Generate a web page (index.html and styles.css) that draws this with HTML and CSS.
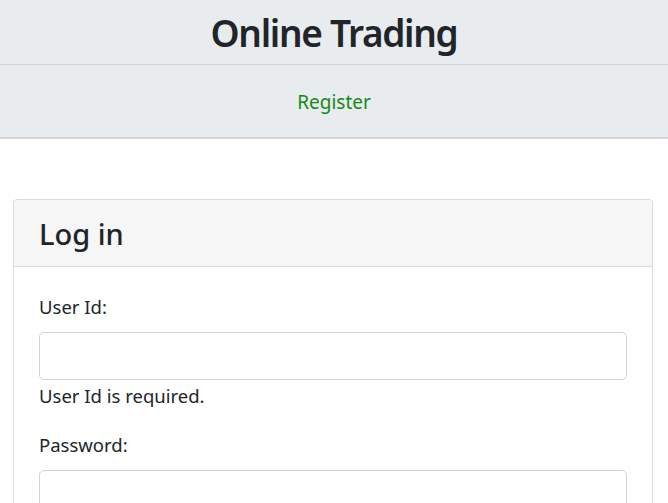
FILE: index.html
```html
<!DOCTYPE html>
<html lang="en">
<head>
<meta charset="utf-8">
<title>Online Trading</title>
<link rel="stylesheet" href="styles.css">
</head>
<body>
<header class="site-header">
  <h1 class="site-title">Online Trading</h1>
</header>
<nav class="site-nav">
  <a class="nav-link" href="#">Register</a>
</nav>
<main class="page">
  <section class="card">
    <div class="card-header">
      <h2 class="card-title">Log in</h2>
    </div>
    <form class="card-body">
      <div class="form-group">
        <label class="form-label" for="userId">User Id:</label>
        <input class="form-control" id="userId" type="text">
        <div class="form-error">User Id is required.</div>
      </div>
      <div class="form-group">
        <label class="form-label" for="password">Password:</label>
        <input class="form-control" id="password" type="password">
      </div>
    </form>
  </section>
</main>
</body>
</html>
```
FILE: styles.css
```css
* { box-sizing: border-box; }
html, body { margin: 0; padding: 0; }
body {
  font-family: "Noto Sans", "Open Sans", sans-serif;
  color: #212529;
  background: #fff;
  font-size: 18.5px;
  line-height: 1.5;
}
.site-header {
  background: #e9ecef;
  height: 65px;
  border-bottom: 1px solid #d2d4d6;
  display: flex;
  align-items: center;
  justify-content: center;
}
.site-title {
  margin: 0;
  font-size: 37px;
  font-weight: 600;
  line-height: 1;
  letter-spacing: -1.3px;
}
.site-nav {
  background: #e9ecef;
  height: 74px;
  border-bottom: 2px solid #d2d4d6;
  display: flex;
  align-items: center;
  justify-content: center;
  padding-top: 3px;
}
.nav-link {
  color: #138a13;
  text-decoration: none;
  font-size: 19px;
}
.page {
  padding: 60px 15px 0 13px;
}
.card {
  border: 1px solid #dcdcdc;
  border-radius: 4px;
  background: #fff;
}
.card-header {
  background: #f6f6f6;
  border-bottom: 1px solid #dcdcdc;
  border-radius: 4px 4px 0 0;
  height: 67px;
  padding: 2px 25px 0;
  display: flex;
  align-items: center;
}
.card-title {
  margin: 0;
  font-size: 29px;
  font-weight: 500;
  line-height: 1.2;
}
.card-body {
  padding: 25px 25px;
  display: flex;
  flex-direction: column;
  gap: 19px;
}
.form-group {
  display: flex;
  flex-direction: column;
}
.form-label {
  margin-bottom: 10px;
  line-height: 30px;
}
.form-control {
  display: block;
  width: 100%;
  height: 48px;
  border: 1px solid #ced4da;
  border-radius: 5px;
  font: inherit;
  padding: 0 16px;
  background: #fff;
}
.form-error {
  line-height: 30px;
  padding-top: 1px;
}
```
